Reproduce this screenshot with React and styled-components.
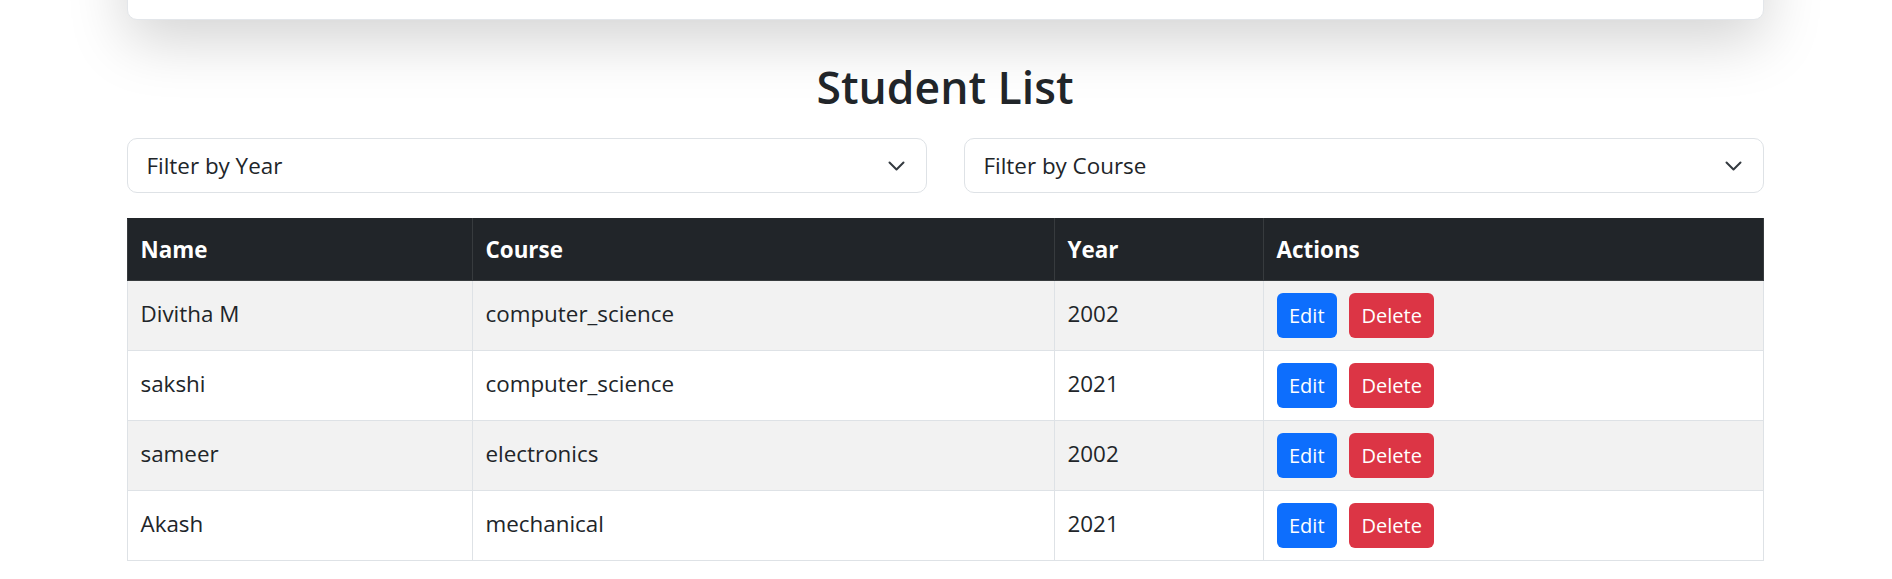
import React from "react";
import styled, { createGlobalStyle } from "styled-components";

const GlobalStyle = createGlobalStyle`
  *, *::before, *::after {
    box-sizing: border-box;
  }
  body {
    margin: 0;
    background: #fff;
    color: #212529;
    font-family: "Open Sans", "Noto Sans", sans-serif;
    font-size: 22px;
  }
`;

const Page = styled.div`
  width: 1639px;
  margin: 0 auto;
  padding-right: 2px;
`;

const TopCard = styled.div`
  height: 200px;
  margin-top: -180px;
  background: #fff;
  border: 1px solid #e3e6ea;
  border-radius: 10px;
  box-shadow: 0 20px 60px rgba(0, 0, 0, 0.175);
`;

const Title = styled.h2`
  margin: 41px 0 0;
  text-align: center;
  font-size: 44.5px;
  font-weight: 600;
  line-height: 52px;
  color: #212529;
`;

const Filters = styled.div`
  display: grid;
  grid-template-columns: 1fr 1fr;
  column-gap: 37px;
  margin-top: 25px;
`;

const SelectBox = styled.div`
  display: flex;
  align-items: center;
  justify-content: space-between;
  height: 55px;
  padding: 0 21px 0 19px;
  border: 1px solid #dee2e6;
  border-radius: 10px;
  font-size: 22.4px;
  color: #212529;
  cursor: pointer;
`;

const Chevron = () => (
  <svg width="17" height="10" viewBox="0 0 17 10" fill="none">
    <path d="M1.5 1.5l7 7 7-7" stroke="#343a40" strokeWidth="2" strokeLinecap="round" strokeLinejoin="round" />
  </svg>
);

const Table = styled.table`
  width: 100%;
  margin-top: 25px;
  border-collapse: collapse;
  table-layout: fixed;
  font-size: 22.4px;
`;

const HeadRow = styled.tr`
  height: 62px;
  background: #212529;
`;

const Th = styled.th`
  padding: 0 13px;
  text-align: left;
  font-weight: 700;
  color: #fff;
  border: 1px solid #373b3e;
  border-top-color: #212529;
`;

const Row = styled.tr`
  height: 70px;
  background: ${(p) => (p.$striped ? "#f2f2f2" : "#fff")};
`;

const Td = styled.td`
  padding: 0 13px ${(p) => (p.$actions ? "0" : "5px")};
  border: 1px solid #dee2e6;
  color: #212529;
`;

const Actions = styled.div`
  display: flex;
  gap: 12px;
`;

const Button = styled.button`
  height: 45px;
  padding: 0 12.5px;
  border: none;
  border-radius: 6px;
  background: ${(p) => (p.$variant === "danger" ? "#dc3545" : "#0d6efd")};
  color: #fff;
  font-family: inherit;
  font-size: 20px;
  cursor: pointer;
`;

const students = [
  { name: "Divitha M", course: "computer_science", year: 2002 },
  { name: "sakshi", course: "computer_science", year: 2021 },
  { name: "sameer", course: "electronics", year: 2002 },
  { name: "Akash", course: "mechanical", year: 2021 },
];

const App = () => {
  return (
    <>
      <GlobalStyle />
      <Page>
        <TopCard />
        <Title>Student List</Title>

        <Filters>
          <SelectBox>
            <span>Filter by Year</span>
            <Chevron />
          </SelectBox>
          <SelectBox>
            <span>Filter by Course</span>
            <Chevron />
          </SelectBox>
        </Filters>

        <Table>
          <colgroup>
            <col style={{ width: 345 }} />
            <col style={{ width: 582 }} />
            <col style={{ width: 209 }} />
            <col />
          </colgroup>
          <thead>
            <HeadRow>
              <Th>Name</Th>
              <Th>Course</Th>
              <Th>Year</Th>
              <Th>Actions</Th>
            </HeadRow>
          </thead>
          <tbody>
            {students.map((s, i) => (
              <Row key={s.name} $striped={i % 2 === 0}>
                <Td>{s.name}</Td>
                <Td>{s.course}</Td>
                <Td>{s.year}</Td>
                <Td $actions>
                  <Actions>
                    <Button>Edit</Button>
                    <Button $variant="danger">Delete</Button>
                  </Actions>
                </Td>
              </Row>
            ))}
          </tbody>
        </Table>
      </Page>
    </>
  );
};

export default App;
